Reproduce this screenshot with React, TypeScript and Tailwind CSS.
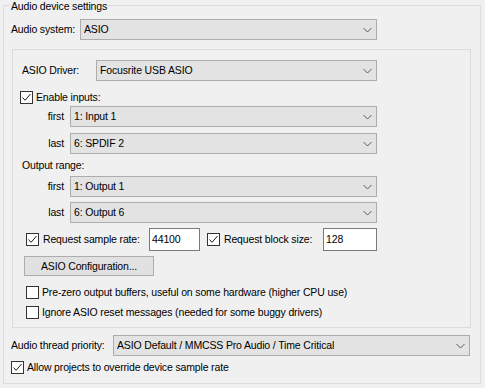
import React from 'react';

const font = "font-['Liberation_Sans',Arial,sans-serif] text-[10.5px] tracking-[-0.15px]";

function Chevron() {
  return (
    <svg width="9" height="6" viewBox="0 0 9 6" className="shrink-0">
      <path d="M0.5 1l4 4 4-4" fill="none" stroke="#5a5a5a" strokeWidth="1" />
    </svg>
  );
}

function Select({ value, w }: { value: string; w: string }) {
  return (
    <div className={`flex h-[21px] ${w} items-center border border-[#adadad] bg-[#e3e3e3] pl-[3px] pr-[4px]`}>
      <span className="flex-1 truncate whitespace-nowrap leading-[15px]">{value}</span>
      <Chevron />
    </div>
  );
}

function Check({ checked }: { checked?: boolean }) {
  return (
    <div className="flex h-[13px] w-[13px] shrink-0 items-center justify-center border border-[#333333] bg-white">
      {checked && (
        <svg width="11" height="11" viewBox="0 0 11 11">
          <path d="M1.5 5.5l2.6 2.8L9.5 2" fill="none" stroke="#1e1e1e" strokeWidth="1" />
        </svg>
      )}
    </div>
  );
}

function CheckRow({ checked, label, className = '' }: { checked?: boolean; label: string; className?: string }) {
  return (
    <div className={`flex h-[13px] items-center ${className}`}>
      <Check checked={checked} />
      <span className="ml-[3px] whitespace-nowrap leading-[15px]">{label}</span>
    </div>
  );
}

function RangeRow({ label, value, className = '' }: { label: string; value: string; className?: string }) {
  return (
    <div className={`flex items-center ${className}`}>
      <span className="w-[57px] shrink-0 whitespace-nowrap pr-[6px] text-right leading-[15px]">{label}</span>
      <Select value={value} w="w-[307px]" />
    </div>
  );
}

export default function App() {
  return (
    <div className={`h-[388px] w-[485px] bg-[#f0f0f0] pl-[3px] pt-[5px] text-black ${font}`}>
      <div className="flex h-[379px] w-[478px] flex-col border border-[#dcdcdc]">
        <div className="-mt-[6px] ml-[6px] w-fit whitespace-nowrap bg-[#f0f0f0] px-[1px] leading-[12px]">Audio device settings</div>

        <div className="mt-[7px] flex items-center pl-[7px]">
          <span className="w-[69px] shrink-0 whitespace-nowrap leading-[15px]">Audio system:</span>
          <Select value="ASIO" w="w-[297px]" />
        </div>

        <div className="ml-[8px] mt-[9px] flex h-[279px] w-[459px] flex-col border border-[#dcdcdc]">
          <div className="mt-[10px] flex items-center pl-[9px]">
            <span className="w-[74px] shrink-0 whitespace-nowrap leading-[15px]">ASIO Driver:</span>
            <Select value="Focusrite USB ASIO" w="w-[281px]" />
          </div>

          <CheckRow checked label="Enable inputs:" className="ml-[7px] mt-[10px]" />
          <RangeRow label="first" value="1: Input 1" className="mt-[2px]" />
          <RangeRow label="last" value="6: SPDIF 2" className="mt-[6px]" />

          <div className="ml-[9px] mt-[4px] whitespace-nowrap leading-[15px]">Output range:</div>
          <RangeRow label="first" value="1: Output 1" className="mt-[3px]" />
          <RangeRow label="last" value="6: Output 6" className="mt-[5px]" />

          <div className="mt-[5px] flex items-center pl-[13px]">
            <Check checked />
            <span className="ml-[4px] w-[106px] shrink-0 whitespace-nowrap leading-[15px]">Request sample rate:</span>
            <div className="flex h-[23px] w-[51px] shrink-0 items-center border border-[#7a7a7a] bg-white pl-[2px] leading-[15px]">44100</div>
            <div className="ml-[7px]">
              <Check checked />
            </div>
            <span className="ml-[4px] w-[99px] shrink-0 whitespace-nowrap leading-[15px]">Request block size:</span>
            <div className="flex h-[23px] w-[54px] shrink-0 items-center border border-[#7a7a7a] bg-white pl-[2px] leading-[15px]">128</div>
          </div>

          <div className="ml-[11px] mt-[5px] flex h-[20px] w-[130px] items-center justify-center whitespace-nowrap border border-[#adadad] bg-[#e1e1e1] leading-[15px]">
            ASIO Configuration...
          </div>

          <CheckRow label="Pre-zero output buffers, useful on some hardware (higher CPU use)" className="ml-[13px] mt-[10px]" />
          <CheckRow label="Ignore ASIO reset messages (needed for some buggy drivers)" className="ml-[13px] mt-[7px]" />
        </div>

        <div className="mt-[7px] flex items-center pl-[7px]">
          <span className="w-[102px] shrink-0 whitespace-nowrap leading-[15px]">Audio thread priority:</span>
          <Select value="ASIO Default / MMCSS Pro Audio / Time Critical" w="w-[357px]" />
        </div>

        <CheckRow checked label="Allow projects to override device sample rate" className="ml-[7px] mt-[5px]" />
      </div>
    </div>
  );
}
